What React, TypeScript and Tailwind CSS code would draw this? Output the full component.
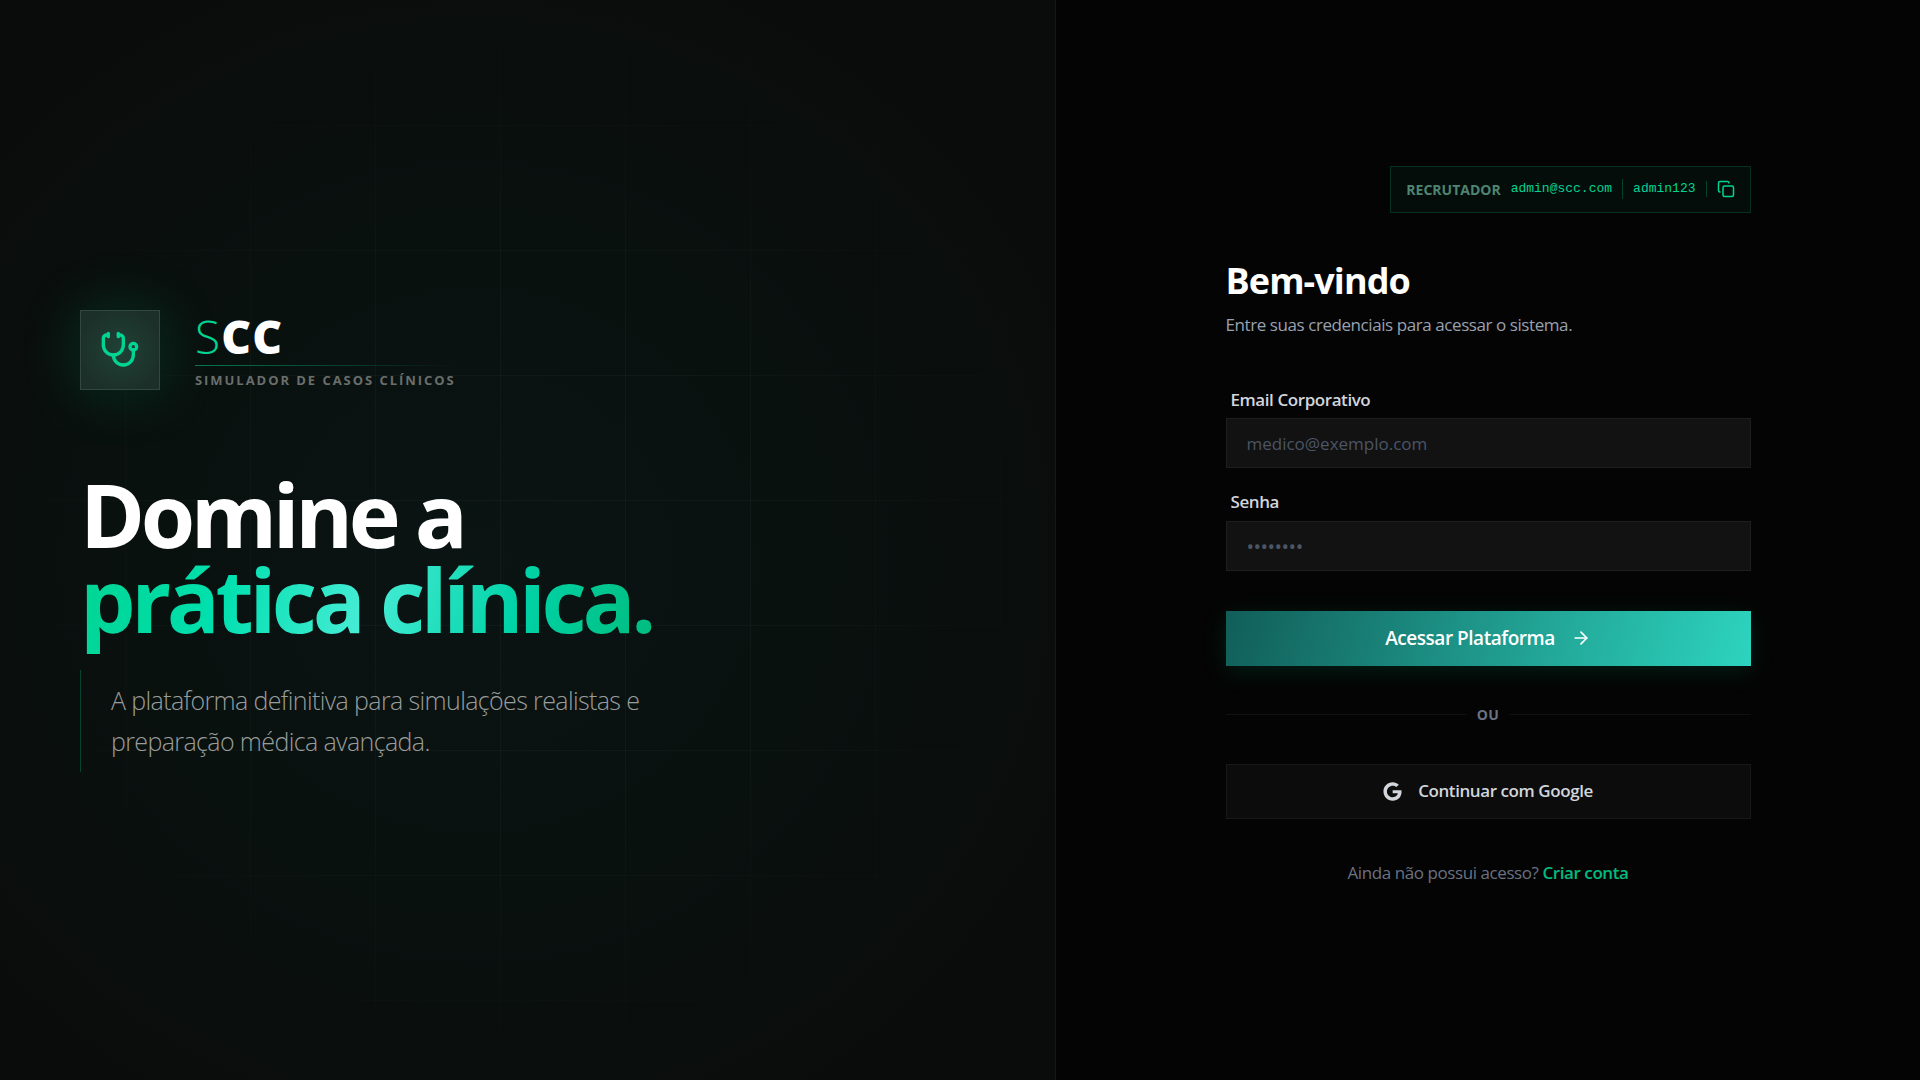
import { useState } from 'react'
import { ArrowRight, Copy, Stethoscope } from 'lucide-react'
import { FaGoogle } from 'react-icons/fa'

const DEMO_EMAIL = 'admin@scc.com'
const DEMO_PASSWORD = 'admin123'

function BrandPanel() {
  return (
    <section className="relative flex w-[55%] flex-col justify-center overflow-hidden border-r border-white/5 bg-[#0a0c0b] px-20">
      {/* Ambient glow */}
      <div className="absolute inset-0 bg-[radial-gradient(ellipse_at_45%_52%,#0a1412_0%,#09110f_40%,#0a0c0b_80%)]" />
      {/* Faint grid, fades out near the edges */}
      <div className="absolute inset-0 bg-[linear-gradient(to_right,rgba(255,255,255,0.03)_1px,transparent_1px),linear-gradient(to_bottom,rgba(255,255,255,0.03)_1px,transparent_1px)] bg-[size:125px_125px] [mask-image:radial-gradient(ellipse_at_center,black_30%,transparent_80%)]" />

      <div className="relative">
        <div className="flex items-center gap-[35px]">
          <div className="flex size-20 items-center justify-center border border-[#31483f] bg-[radial-gradient(circle,#204236_0%,#1c3029_75%)] shadow-[0_0_60px_rgba(0,188,125,0.2)]">
            <Stethoscope className="size-10 text-emerald-400" />
          </div>
          <div>
            <p className="pb-0.5 text-[46px] leading-[54px] font-extrabold tracking-wide text-white">
              <span className="font-light text-emerald-400">S</span>CC
            </p>
            <div className="mb-0.5 h-px bg-gradient-to-r from-emerald-500/60 to-transparent" />
            <p className="text-[13px] leading-6 font-bold tracking-[0.15em] text-[#6a6e6c] uppercase">
              Simulador de Casos Clínicos
            </p>
          </div>
        </div>

        <h1 className="mt-20 text-[88px] leading-[85px] font-bold tracking-tighter text-white">
          Domine a
          <br />
          <span className="-mb-5 inline-block bg-[linear-gradient(105deg,#00d492,#00e0ae_25%,#46ecd5_50%,#00d3a7_75%,#00bc7d)] bg-clip-text pb-5 text-transparent">
            prática clínica.
          </span>
        </h1>

        <p className="mt-7 max-w-[600px] border-l border-emerald-500/30 py-2.5 pl-[30px] text-[25px] leading-[41px] font-light tracking-tight text-[#999d9c]">
          A plataforma definitiva para simulações realistas e preparação médica avançada.
        </p>
      </div>
    </section>
  )
}

function DemoCredentials() {
  return (
    <div className="flex h-[47px] items-center self-end border border-emerald-500/20 bg-emerald-500/5 px-[15px] text-[13px]">
      <span className="text-[14px] font-bold text-[#4f8471]">RECRUTADOR</span>
      <code className="ml-2.5 font-['Liberation_Mono',monospace] text-emerald-400">{DEMO_EMAIL}</code>
      <span className="mx-2.5 h-5 w-px bg-emerald-500/30" />
      <code className="font-['Liberation_Mono',monospace] text-emerald-400">{DEMO_PASSWORD}</code>
      <span className="mx-2.5 h-4 w-px bg-emerald-500/30" />
      <button
        type="button"
        aria-label="Copiar credenciais"
        onClick={() => navigator.clipboard.writeText(`${DEMO_EMAIL} ${DEMO_PASSWORD}`)}
        className="text-emerald-400"
      >
        <Copy className="size-[18px]" />
      </button>
    </div>
  )
}

export default function App() {
  const [email, setEmail] = useState('')
  const [password, setPassword] = useState('')

  return (
    <main className="flex min-h-screen bg-[#040404] font-['Open_Sans','Noto_Sans',sans-serif]">
      <BrandPanel />

      <section className="flex flex-1 flex-col items-center justify-center pb-7">
        <div className="flex w-full max-w-[525px] flex-col">
          <DemoCredentials />

          <h2 className="mt-[43px] text-[36px] leading-[50px] font-bold tracking-tight text-white">Bem-vindo</h2>
          <p className="mt-[5px] text-[17px] leading-7 tracking-tight text-[#99a1af]">
            Entre suas credenciais para acessar o sistema.
          </p>

          <form className="mt-[47px] flex flex-col" onSubmit={(e) => e.preventDefault()}>
            <label htmlFor="email" className="ml-[5px] text-[17px] leading-7 font-semibold tracking-tight text-[#d1d5dc]">
              Email Corporativo
            </label>
            <input
              id="email"
              type="email"
              value={email}
              onChange={(e) => setEmail(e.target.value)}
              placeholder="medico@exemplo.com"
              className="mt-1 h-[50px] border border-white/5 bg-[#121212] px-5 pt-0.5 text-[17px] text-white outline-none placeholder:text-[#4a5565]"
            />
            <label htmlFor="password" className="mt-5 ml-[5px] text-[17px] leading-7 font-semibold tracking-tight text-[#d1d5dc]">
              Senha
            </label>
            <input
              id="password"
              type="password"
              value={password}
              onChange={(e) => setPassword(e.target.value)}
              placeholder="••••••••"
              className="mt-[5px] h-[50px] border border-white/5 bg-[#121212] px-5 pt-0.5 text-[20px] tracking-tight text-white outline-none placeholder:text-[#4a5565]"
            />
            <button
              type="submit"
              className="mt-10 flex h-[55px] items-center justify-center gap-4 bg-[linear-gradient(105deg,#115e59,#2dd4bf)] text-[19px] font-semibold tracking-tight text-white shadow-[0_5px_25px_rgba(0,188,125,0.15)]"
            >
              Acessar Plataforma
              <ArrowRight className="size-5" />
            </button>
          </form>

          <div className="my-9 flex items-center gap-2.5">
            <div className="h-px flex-1 bg-white/5" />
            <span className="text-[14px] leading-[26px] font-bold tracking-wide text-[#6a7282]">OU</span>
            <div className="h-px flex-1 bg-white/5" />
          </div>

          <button
            type="button"
            className="flex h-[55px] items-center justify-center gap-4 border border-white/5 bg-[#0c0c0c] text-[17px] font-semibold tracking-tight text-[#d1d5dc]"
          >
            <FaGoogle className="size-[19px]" aria-hidden="true" />
            Continuar com Google
          </button>

          <p className="mt-10 text-center text-[17px] leading-7 tracking-tight text-[#6a7282]">
            Ainda não possui acesso?{' '}
            <a href="#cadastro" className="font-semibold text-emerald-500">
              Criar conta
            </a>
          </p>
        </div>
      </section>
    </main>
  )
}
